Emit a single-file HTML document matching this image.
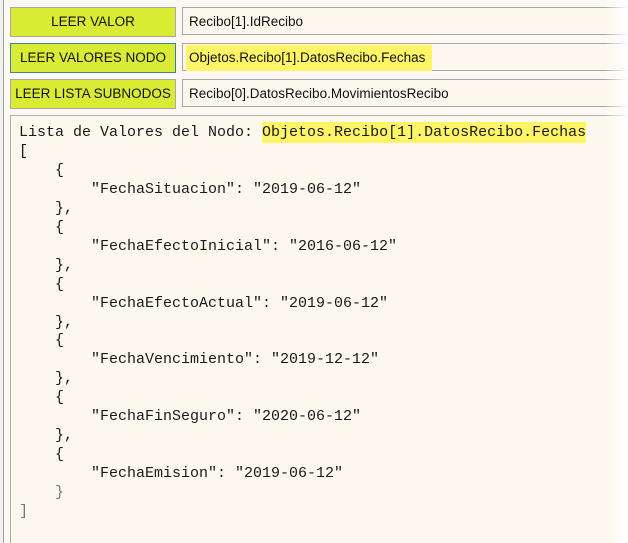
<!DOCTYPE html>
<html><head><meta charset="utf-8"><style>
html,body{margin:0;padding:0;width:628px;height:543px;overflow:hidden;}
body{position:relative;background:#fdf9f2;font-family:"Liberation Sans",sans-serif;}
.lb{position:absolute;left:0;top:0;width:3px;height:543px;background:#f0f0f0;border-right:1px solid #a0a0a0;}
.btn{position:absolute;left:10px;width:164px;height:28px;background:#d9ec33;border:1px solid #a8a8a8;font-size:13.5px;color:#111;text-align:center;line-height:28px;}
.btn.sel{border-color:#3c7fb1;}
.tb{position:absolute;left:182px;width:460px;height:28px;background:#fdf8ee;border:1px solid #a8a8a8;border-right:none;font-size:13.5px;color:#111;line-height:28px;padding-left:6px;box-sizing:border-box;}
.hl{background:#fff566;}
.panel{position:absolute;left:10px;top:115px;width:640px;height:428px;border:1px solid #b0b0b0;border-bottom:none;background:#fdf8ee;box-sizing:border-box;}
pre{position:absolute;left:19px;top:124px;margin:0;font-family:"Liberation Mono",monospace;font-size:15px;line-height:18.95px;color:#1a1a1a;}
.fade{position:absolute;right:0;top:0;width:24px;height:543px;background:linear-gradient(to right,rgba(255,255,255,0),#fff);}
.g{color:#777;}
</style></head><body>
<div class="lb"></div>
<div class="btn" style="top:7px">LEER VALOR</div>
<div class="tb" style="top:7px">Recibo[1].IdRecibo</div>
<div class="btn sel" style="top:43px">LEER VALORES NODO</div>
<div class="tb" style="top:43px"><span class="hl" style="display:inline-block;margin-left:-3px;padding:0 3px;width:240px;line-height:26px">Objetos.Recibo[1].DatosRecibo.Fechas</span></div>
<div class="btn" style="top:79px">LEER LISTA SUBNODOS</div>
<div class="tb" style="top:79px">Recibo[0].DatosRecibo.MovimientosRecibo</div>
<div class="panel"></div>
<pre>Lista de Valores del Nodo: <span class="hl" style="padding:2px 0">Objetos.Recibo[1].DatosRecibo.Fechas</span>
[
    {
        "FechaSituacion": "2019-06-12"
    },
    {
        "FechaEfectoInicial": "2016-06-12"
    },
    {
        "FechaEfectoActual": "2019-06-12"
    },
    {
        "FechaVencimiento": "2019-12-12"
    },
    {
        "FechaFinSeguro": "2020-06-12"
    },
    {
        "FechaEmision": "2019-06-12"
    <span class="g">}</span>
<span class="g">]</span></pre>
<div class="fade"></div>
</body></html>
